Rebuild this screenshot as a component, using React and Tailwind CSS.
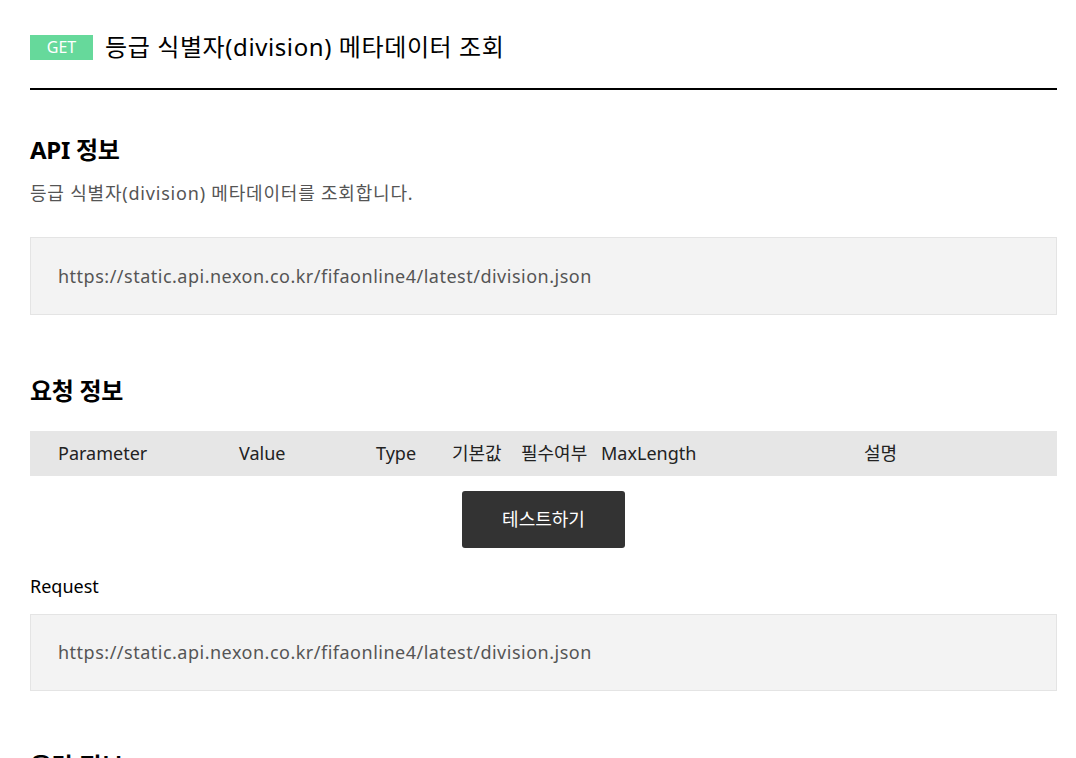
export default function App() {
  const url = "https://static.api.nexon.co.kr/fifaonline4/latest/division.json";
  const cols = [
    { label: "Parameter", w: "w-[181px]" },
    { label: "Value", w: "w-[137px]" },
    { label: "Type", w: "w-[76px]" },
    { label: "기본값", w: "w-[69px]" },
    { label: "필수여부", w: "w-[80px]" },
    { label: "MaxLength", w: "w-[263px]" },
    { label: "설명", w: "w-[100px]" },
  ];

  return (
    <div className="bg-white font-['Noto_Sans','Noto_Sans_CJK_KR',sans-serif] text-black overflow-hidden h-[758px]">
      <div className="px-[30px] w-[1087px]">
        {/* Title */}
        <div className="flex items-center gap-3 pt-[31px] pb-[25px] border-b-2 border-black">
          <span className="bg-[#66d99b] text-white text-[16px] leading-[25px] w-[63px] text-center">
            GET
          </span>
          <h1 className="text-[24px] leading-[32px] font-normal tracking-[0.6px]">
            등급 식별자(division) 메타데이터 조회
          </h1>
        </div>

        {/* API info */}
        <h2 className="mt-[43px] text-[24px] font-bold leading-[34px] tracking-[-0.3px]">API 정보</h2>
        <p className="mt-[13px] text-[18px] leading-[26px] text-[#555] tracking-[0.8px]">
          등급 식별자(division) 메타데이터를 조회합니다.
        </p>
        <div className="mt-[31px] h-[78px] bg-[#f3f3f3] border border-[#e4e4e4] flex items-center px-[27px] text-[18px] text-[#555] tracking-[0.5px]">
          {url}
        </div>

        {/* Request info */}
        <h2 className="mt-[59px] text-[24px] font-bold leading-[34px] tracking-[-0.3px]">요청 정보</h2>
        <div className="mt-[23px] h-[45px] bg-[#e6e6e6] flex items-center pl-[28px] text-[18px] text-[#222]">
          {cols.map((c) => (
            <div key={c.label} className={`${c.w} shrink-0`}>
              {c.label}
            </div>
          ))}
        </div>
        <div className="flex justify-center mt-[15px]">
          <button className="w-[163px] h-[57px] bg-[#333] text-white rounded-[3px] text-[18px]">
            테스트하기
          </button>
        </div>
        <div className="mt-[25px] text-[18px] leading-[26px]">Request</div>
        <div className="mt-[15px] h-[77px] bg-[#f3f3f3] border border-[#e4e4e4] flex items-center px-[27px] text-[18px] text-[#555] tracking-[0.5px]">
          {url}
        </div>

        {/* Response info */}
        <h2 className="mt-[58px] text-[24px] font-bold leading-[34px] tracking-[-0.3px]">응답 정보</h2>
      </div>
    </div>
  );
}
